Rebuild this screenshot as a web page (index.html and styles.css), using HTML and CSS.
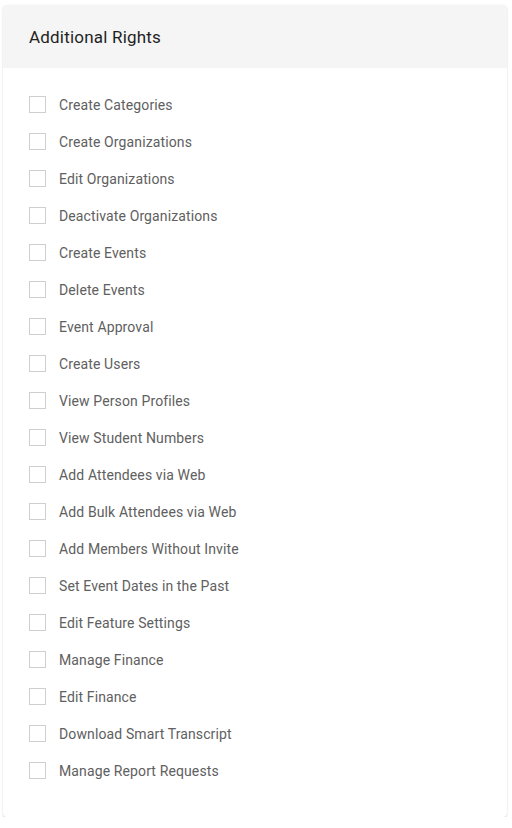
FILE: index.html
```html
<!DOCTYPE html>
<html lang="en">
<head>
<meta charset="utf-8">
<title>Additional Rights</title>
<link rel="stylesheet" href="styles.css">
</head>
<body>
<section class="card">
  <header class="card-header">
    <h2 class="card-title">Additional Rights</h2>
  </header>
  <ul class="rights">
    <li><label class="right"><input type="checkbox"><span class="box"></span><span>Create Categories</span></label></li>
    <li><label class="right"><input type="checkbox"><span class="box"></span><span>Create Organizations</span></label></li>
    <li><label class="right"><input type="checkbox"><span class="box"></span><span>Edit Organizations</span></label></li>
    <li><label class="right"><input type="checkbox"><span class="box"></span><span>Deactivate Organizations</span></label></li>
    <li><label class="right"><input type="checkbox"><span class="box"></span><span>Create Events</span></label></li>
    <li><label class="right"><input type="checkbox"><span class="box"></span><span>Delete Events</span></label></li>
    <li><label class="right"><input type="checkbox"><span class="box"></span><span>Event Approval</span></label></li>
    <li><label class="right"><input type="checkbox"><span class="box"></span><span>Create Users</span></label></li>
    <li><label class="right"><input type="checkbox"><span class="box"></span><span>View Person Profiles</span></label></li>
    <li><label class="right"><input type="checkbox"><span class="box"></span><span>View Student Numbers</span></label></li>
    <li><label class="right"><input type="checkbox"><span class="box"></span><span>Add Attendees via Web</span></label></li>
    <li><label class="right"><input type="checkbox"><span class="box"></span><span>Add Bulk Attendees via Web</span></label></li>
    <li><label class="right"><input type="checkbox"><span class="box"></span><span>Add Members Without Invite</span></label></li>
    <li><label class="right"><input type="checkbox"><span class="box"></span><span>Set Event Dates in the Past</span></label></li>
    <li><label class="right"><input type="checkbox"><span class="box"></span><span>Edit Feature Settings</span></label></li>
    <li><label class="right"><input type="checkbox"><span class="box"></span><span>Manage Finance</span></label></li>
    <li><label class="right"><input type="checkbox"><span class="box"></span><span>Edit Finance</span></label></li>
    <li><label class="right"><input type="checkbox"><span class="box"></span><span>Download Smart Transcript</span></label></li>
    <li><label class="right"><input type="checkbox"><span class="box"></span><span>Manage Report Requests</span></label></li>
  </ul>
</section>
</body>
</html>
```
FILE: styles.css
```css
html, body {
  margin: 0;
  padding: 0;
  background: #ffffff;
}

body {
  padding: 5px 5px 0 3px;
  font-family: Roboto, "Liberation Sans", Arial, sans-serif;
}

.card {
  width: 504px;
  background: #ffffff;
  border-radius: 4px;
  box-shadow: 0 1px 2px rgba(0, 0, 0, 0.16), 0 0 1px rgba(0, 0, 0, 0.08);
  overflow: hidden;
}

.card-header {
  background: #f5f5f5;
  height: 63px;
  display: flex;
  align-items: center;
  padding: 0 26px;
}

.card-title {
  margin: 0;
  font-size: 17px;
  font-weight: 400;
  letter-spacing: 0.2px;
  color: #1f1f1f;
}

.rights {
  list-style: none;
  margin: 0;
  padding: 18px 26px 28px;
  display: flex;
  flex-direction: column;
}

.right {
  display: flex;
  align-items: center;
  gap: 13px;
  height: 37px;
  font-size: 14px;
  letter-spacing: 0.12px;
  color: #606060;
  cursor: pointer;
}

.right input {
  position: absolute;
  opacity: 0;
  width: 0;
  height: 0;
  margin: 0;
}

.box {
  width: 17px;
  height: 17px;
  box-sizing: border-box;
  border: 1px solid #cfcfcf;
  background: #ffffff;
  flex: none;
}

.right input:checked + .box {
  background: #3c7cc4;
  border-color: #3c7cc4;
}
```
